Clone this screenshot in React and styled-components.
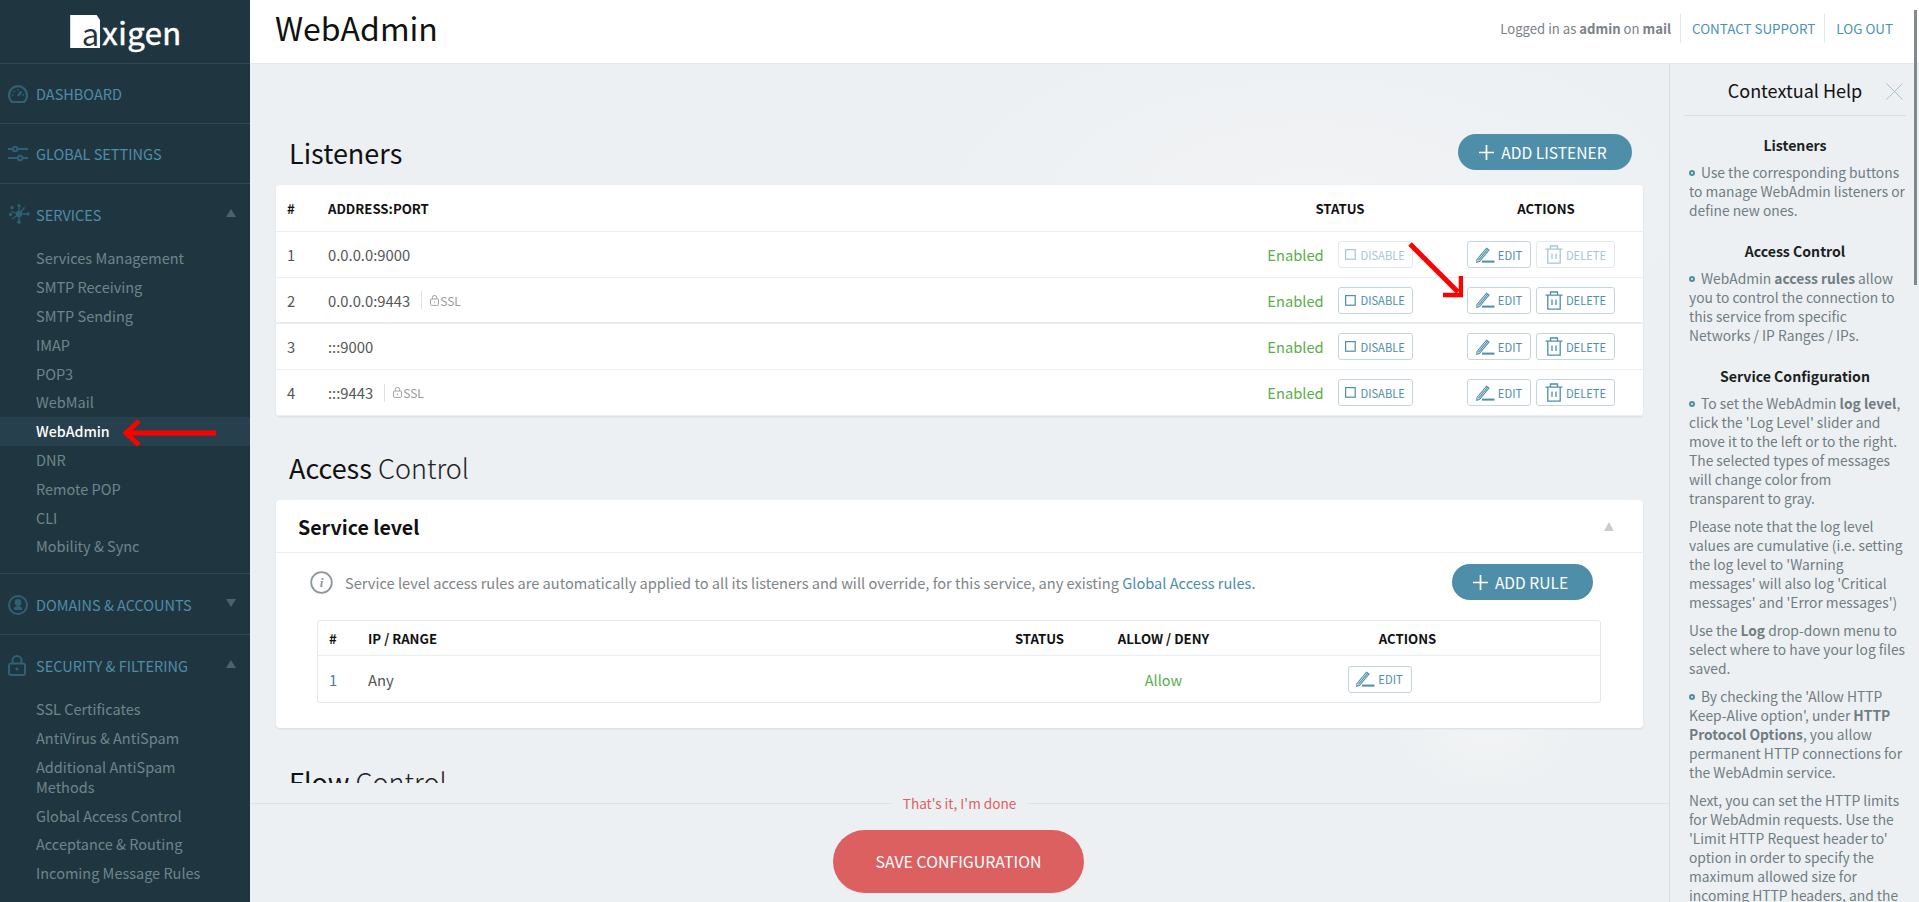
import React from "react";
import styled, { createGlobalStyle } from "styled-components";

const GlobalStyle = createGlobalStyle`
	html, body {
		margin: 0;
		height: 100%;
		overflow: hidden;
		background: #edf0f2;
		font-family: "Noto Sans CJK SC", "Source Sans Pro", "Liberation Sans", sans-serif;
	}
	* {
		box-sizing: border-box;
	}
`;

const services = ["Services Management", "SMTP Receiving", "SMTP Sending", "IMAP", "POP3", "WebMail", "WebAdmin", "DNR", "Remote POP", "CLI", "Mobility & Sync"];
const security = ["SSL Certificates", "AntiVirus & AntiSpam", "Additional AntiSpam Methods", "Global Access Control", "Acceptance & Routing", "Incoming Message Rules"];
const listeners = [
	{ id: 1, address: "0.0.0.0:9000", muted: true },
	{ id: 2, address: "0.0.0.0:9443", ssl: true, thick: true },
	{ id: 3, address: ":::9000" },
	{ id: 4, address: ":::9443", ssl: true },
];

const GaugeIcon = () => (
	<svg width="20" height="18" viewBox="0 0 20 18" fill="none" stroke="#2f6075" strokeWidth="2.2">
		<path d="M4 17 C1.8 15.4 1 13 1 10.5 C1 5.2 5 1.2 10 1.2 C15 1.2 19 5.2 19 10.5 C19 13 18.2 15.4 16 17 Z" />
		<path d="M10 11 L13.5 6.5" />
		<path d="M4 10h1.5M14.5 10H16M10 4v1.5M5.8 6l1 1" strokeWidth="1.5" />
	</svg>
);

const SlidersIcon = () => (
	<svg width="20" height="16" viewBox="0 0 20 16" fill="none" stroke="#2f6075" strokeWidth="2">
		<path d="M0 3h4.5M10 3h10M0 12h9.5M15 12h5" />
		<circle cx="7.2" cy="3" r="2.2" />
		<circle cx="12.2" cy="12" r="2.2" />
	</svg>
);

const NetworkIcon = () => (
	<svg width="22" height="20" viewBox="0 0 22 20" fill="#2f6075" stroke="#2f6075" strokeWidth="1.3">
		<circle cx="11" cy="10" r="2.6" />
		<path d="M11 10V2M11 10v8M11 10L3 7.5M11 10l8 0M11 10L4 15M11 10L16.5 3.5" />
		<circle cx="11" cy="1.8" r="1" />
		<circle cx="11" cy="18" r="1.2" />
		<circle cx="2.5" cy="10.5" r="1" />
		<circle cx="20" cy="10" r="1" />
		<circle cx="4" cy="3.5" r="1" />
	</svg>
);

const UserIcon = () => (
	<svg width="20" height="20" viewBox="0 0 20 20" fill="none" stroke="#2f6075" strokeWidth="2">
		<circle cx="10" cy="10" r="9" />
		<circle cx="10" cy="7.5" r="2.4" fill="#2f6075" />
		<path d="M5.8 15c0-3 1.8-4 4.2-4s4.2 1 4.2 4z" fill="#2f6075" stroke="none" />
	</svg>
);

const LockIcon = () => (
	<svg width="18" height="21" viewBox="0 0 18 21" fill="none" stroke="#2f6075" strokeWidth="2">
		<rect x="1" y="8.5" width="16" height="11.5" rx="2" />
		<path d="M4.5 8.5V5.5a4.5 4.5 0 0 1 9 0v3" />
		<circle cx="9" cy="14" r="1.6" fill="#2f6075" stroke="none" />
	</svg>
);

const PlusIcon = ({ size = 15 }) => (
	<svg width={size} height={size} viewBox="0 0 15 15" stroke="#fff" strokeWidth="1.7">
		<path d="M7.5 0v15M0 7.5h15" />
	</svg>
);

const BoxIcon = () => (
	<svg width="11" height="11" viewBox="0 0 11 11" fill="none" stroke="currentColor" strokeWidth="1.2">
		<rect x="0.6" y="0.6" width="9.6" height="9.6" />
	</svg>
);

const PencilIcon = () => (
	<svg width="19" height="16" viewBox="0 0 19 16" fill="none" stroke="currentColor" strokeWidth="1.1">
		<path d="M1 12.5 L10.5 1.2 L13 3.2 L3.4 14.5 L0.8 15.2 Z" />
		<path d="M2.4 13.4 L11.8 2.2" />
		<path d="M6 14.6h12.5" strokeWidth="2" />
	</svg>
);

const TrashIcon = () => (
	<svg width="18" height="19" viewBox="0 0 18 19" fill="none" stroke="currentColor" strokeWidth="1.3">
		<path d="M0.5 4.2h17M5.5 4.2V1h7v3.2" />
		<path d="M2.8 4.2v14h12.4v-14" />
		<path d="M7 8.5v5.5M11 8.5v5.5" />
	</svg>
);

const SmallLock = () => (
	<svg width="9" height="11" viewBox="0 0 9 11" fill="none" stroke="#999" strokeWidth="0.9">
		<rect x="0.5" y="4" width="8" height="6.4" rx="1" />
		<path d="M2.3 4V2.6a2.2 2.2 0 0 1 4.4 0V4" />
		<circle cx="4.5" cy="7.2" r="0.7" fill="#999" stroke="none" />
	</svg>
);

const InfoIcon = () => (
	<svg width="23" height="23" viewBox="0 0 23 23" fill="none">
		<circle cx="11.5" cy="11.5" r="10.3" stroke="#8d979b" strokeWidth="1.8" />
		<text x="11.5" y="16" textAnchor="middle" fontFamily="Liberation Serif, serif" fontStyle="italic" fontWeight="700" fontSize="13" fill="#8d979b">i</text>
	</svg>
);

const CloseIcon = () => (
	<svg width="17" height="17" viewBox="0 0 17 17" stroke="#a3c5d1" strokeWidth="1">
		<path d="M0.5 0.5l16 16M16.5 0.5l-16 16" />
	</svg>
);

const Shell = styled.div`
	display: grid;
	grid-template-columns: 250px 1fr;
	width: 100vw;
	height: 100vh;
	overflow: hidden;
	position: relative;
`;

const Sidebar = styled.aside`
	background: #1f3640;
	height: 100vh;
	overflow: hidden;
`;

const LogoRow = styled.div`
	height: 64px;
	display: flex;
	align-items: center;
	justify-content: center;
	gap: 2px;
	padding-left: 2px;
	border-bottom: 1px solid #33494f;
`;

const LogoBox = styled.span`
	width: 30px;
	height: 33px;
	background: #fff;
	color: #1f3640;
	font-size: 31px;
	line-height: 35px;
	text-align: right;
	padding-right: 1px;
	clip-path: polygon(0 0, 88% 0, 100% 16%, 100% 100%, 0 100%);
`;

const LogoText = styled.span`
	color: #fff;
	font-size: 31px;
	line-height: 33px;
	letter-spacing: 0.5px;
	-webkit-text-stroke: 0.5px #fff;
`;

const Section = styled.div`
	border-bottom: ${(p) => (p.$last ? "none" : "1px solid #33494f")};
	padding-bottom: ${(p) => (p.$open ? "12px" : "0")};
`;

const SectionHead = styled.div`
	height: ${(p) => (p.$tall ? "60px" : "59px")};
	padding-top: ${(p) => (p.$low ? "2px" : "0")};
	display: flex;
	align-items: center;
	color: #4f8ca8;
	font-size: 14.5px;
	position: relative;
`;

const IconSlot = styled.span`
	width: 36px;
	padding-left: 8px;
	display: flex;
	align-items: center;
	justify-content: flex-start;
`;

const Caret = styled.span`
	position: absolute;
	left: 226px;
	top: 50%;
	margin-top: -5px;
	width: 0;
	height: 0;
	border-left: 5px solid transparent;
	border-right: 5px solid transparent;
	border-${(p) => (p.$down ? "top" : "bottom")}: 8px solid #4d626a;
`;

const SubItem = styled.div`
	position: relative;
	min-height: 28.8px;
	padding: 4.4px 36px;
	font-size: ${(p) => (p.$active ? "14.2px" : "14.5px")};
	line-height: 20px;
	color: ${(p) => (p.$active ? "#fff" : "#6f858c")};
	background: ${(p) => (p.$active ? "#26404d" : "transparent")};
	font-weight: ${(p) => (p.$active ? 500 : 400)};
`;

const SideArrow = styled.svg`
	position: absolute;
	left: 122px;
	top: 0;
`;

const MainArea = styled.div`
	display: flex;
	flex-direction: column;
	height: 100vh;
	min-width: 0;
`;

const TopBar = styled.header`
	height: 64px;
	flex: none;
	background: #fff;
	border-bottom: 1px solid #e3e7e9;
	display: flex;
	align-items: center;
	justify-content: space-between;
	padding: 0 26px 6px 25px;
`;

const PageTitle = styled.h1`
	margin: -4px 0 0;
	font-size: 32px;
	font-weight: 400;
	color: #111;
`;

const UserBar = styled.div`
	display: flex;
	align-items: center;
	font-size: 13.4px;
	color: #7c8185;
	span {
		font-size: 13.15px;
	}
	b {
		font-weight: 700;
	}
`;

const TopLink = styled.a`
	color: #4b93b3;
	height: 29px;
	line-height: 29px;
	margin-left: 9px;
	padding-left: 11px;
	border-left: 1px solid #e3e7e9;
`;

const Body = styled.div`
	flex: 1;
	min-height: 0;
	display: flex;
`;

const Center = styled.div`
	flex: 1;
	min-width: 0;
	display: flex;
	flex-direction: column;
`;

const Scroller = styled.main`
	flex: 1;
	min-height: 0;
	overflow: hidden;
	padding: 70px 26px 0;
	background:
		radial-gradient(ellipse 200px 40px at 52% 83%, #f6f8f9 0%, transparent 100%),
		radial-gradient(ellipse 420px 200px at 75% 20%, #f1f3f5 0%, transparent 100%),
		radial-gradient(ellipse 100px 90px at 87% 90%, #f2f4f5 0%, transparent 100%),
		#edf0f2;
`;

const HeadRow = styled.div`
	display: flex;
	align-items: center;
	justify-content: space-between;
	height: 36px;
	padding: 0 11px 0 13px;
	margin: ${(p) => p.$margin || "33px 0 15px"};
`;

const Heading = styled.h2`
	margin: 0;
	font-size: 27px;
	font-weight: 400;
	color: #111;
	span {
		font-weight: 300;
		color: #222;
	}
`;

const PillButton = styled.button`
	height: 36px;
	width: ${(p) => p.$width};
	border: none;
	border-radius: 18px;
	background: #4e8ea8;
	color: #fff;
	font-family: inherit;
	font-size: 15.6px;
	padding: 0 4px 0 0;
	display: flex;
	align-items: center;
	justify-content: center;
	gap: 7px;
`;

const Card = styled.section`
	position: relative;
	background: #fff;
	border-radius: 4px;
	box-shadow: 0 1px 2px #d6dcdf;
`;

const ListRow = styled.div`
	display: grid;
	grid-template-columns: 41px 1fr 207px 158px;
	align-items: center;
	height: ${(p) => (p.$head ? "47px" : "46px")};
	padding: 0 18px 0 11px;
	border-bottom: ${(p) => (p.$thick ? "2px solid #e9edef" : "1px solid #eceff1")};
	font-size: 14.8px;
	color: #555;
	&:last-child {
		border-bottom: none;
	}
`;

const HeadCell = styled.div`
	font-size: 13.2px;
	font-weight: 700;
	color: #111;
	text-align: ${(p) => p.$align || "left"};
`;

const AddressCell = styled.div`
	display: flex;
	align-items: center;
`;

const SslTag = styled.span`
	display: inline-flex;
	align-items: center;
	gap: 1px;
	margin-left: 11px;
	padding-left: 8px;
	height: 18px;
	border-left: 1px solid #dfe3e5;
	font-size: 12px;
	color: #999;
`;

const StatusCell = styled.div`
	display: flex;
	align-items: center;
	justify-content: center;
	gap: 14px;
	margin-right: 47px;
`;

const HeadStatus = styled(HeadCell)`
	margin-right: 47px;
`;

const Enabled = styled.span`
	color: #5aae4a;
	font-size: 14.7px;
`;

const ActionCell = styled.div`
	display: flex;
	align-items: center;
	gap: 5px;
	padding-left: ${(p) => p.$indent || "0"};
`;

const ActionButton = styled.button`
	height: 27px;
	width: ${(p) => p.$width};
	display: flex;
	align-items: center;
	justify-content: center;
	gap: ${(p) => p.$gap || "3px"};
	padding: 0;
	background: #fff;
	border: 1px solid #c3d6dd;
	border-radius: 3px;
	color: #4e8ea8;
	font-family: inherit;
	font-size: 11.2px;
	opacity: ${(p) => (p.$muted ? 0.5 : 1)};
	svg {
		flex: none;
	}
`;

const CardHead = styled.div`
	height: 53px;
	display: flex;
	align-items: center;
	justify-content: space-between;
	padding: 0 29px 0 22px;
	border-bottom: 1px solid #eceff1;
`;

const CardTitle = styled.h3`
	margin: 0;
	font-size: 19.6px;
	font-weight: 700;
	color: #111;
`;

const SmallCaret = styled.span`
	width: 0;
	height: 0;
	border-left: 5px solid transparent;
	border-right: 5px solid transparent;
	border-bottom: 9px solid #c8cccf;
`;

const CardBody = styled.div`
	padding: 11px 42px 25px 41px;
`;

const InfoRow = styled.div`
	display: flex;
	align-items: center;
	justify-content: space-between;
	height: 36px;
	margin: 0 8px 20px -7px;
`;

const InfoText = styled.p`
	margin: 0;
	display: flex;
	align-items: center;
	gap: 12px;
	font-size: 14.6px;
	color: #808589;
	a {
		color: #4a8fa8;
	}
`;

const RuleTable = styled.div`
	border: 1px solid #e3e7e9;
	border-radius: 3px;
`;

const RuleRow = styled.div`
	display: grid;
	grid-template-columns: 39px 1fr 100px 148px 340px;
	align-items: center;
	height: ${(p) => (p.$head ? "35px" : "46px")};
	padding: 0 22.5px 0 11px;
	border-bottom: ${(p) => (p.$head ? "1px solid #e9edef" : "none")};
	font-size: 14.8px;
	color: #555;
`;

const RuleIndex = styled.span`
	color: #3f7f9a;
`;

const Allow = styled.span`
	color: #5aae4a;
	text-align: center;
	font-size: 14.5px;
`;

const OverArrow = styled.svg`
	position: absolute;
	left: 1131px;
	top: 56px;
`;

const Footer = styled.footer`
	height: 119px;
	flex: none;
	padding-top: 10px;
	display: flex;
	flex-direction: column;
	align-items: center;
	background: #edf0f2;
`;

const DoneLine = styled.div`
	width: 100%;
	height: 20px;
	display: flex;
	align-items: center;
	gap: 11px;
	color: #dd6060;
	font-size: 13.6px;
	&::before,
	&::after {
		content: "";
		flex: 1;
		height: 1px;
		background: #dfe3e5;
	}
`;

const SaveButton = styled.button`
	width: 251px;
	height: 63px;
	margin: 17px 2px 0 0;
	border: none;
	border-radius: 32px;
	background: #dd6060;
	color: #fff;
	font-family: inherit;
	font-size: 15.9px;
`;

const Help = styled.aside`
	width: 250px;
	flex: none;
	overflow: hidden;
	border-left: 1px solid #d6dcdf;
	padding: 0 13px 0 14px;
`;

const HelpHead = styled.div`
	position: relative;
	height: 52px;
	display: flex;
	align-items: center;
	justify-content: center;
	border-bottom: 1px solid #d9dee0;
	font-size: 18px;
	color: #111;
	svg {
		position: absolute;
		right: 3px;
		top: 19px;
	}
`;

const HelpTitle = styled.h4`
	margin: ${(p) => (p.$first ? "20px" : "22px")} 0 8px;
	text-align: center;
	font-size: 14.1px;
	line-height: 19px;
	font-weight: 700;
	color: #1a1f22;
`;

const HelpText = styled.p`
	margin: 0 0 9px;
	padding-left: 5px;
	font-size: 13.8px;
	line-height: 19px;
	color: #6f7d83;
	b {
		font-weight: 700;
	}
`;

const Dot = styled.span`
	display: inline-block;
	width: 6px;
	height: 6px;
	margin: 0 6px 3px 0;
	border: 2px solid #4e8ea8;
	border-radius: 50%;
	vertical-align: middle;
`;

const ScrollThumb = styled.div`
	position: absolute;
	left: 1914px;
	top: 10px;
	width: 3px;
	height: 275px;
	background: #7f8a8f;
`;

const App = () => {
	return (
		<Shell>
			<GlobalStyle />
			<Sidebar>
				<LogoRow>
					<LogoBox>a</LogoBox>
					<LogoText>xigen</LogoText>
				</LogoRow>
				<Section>
					<SectionHead><IconSlot><GaugeIcon /></IconSlot>DASHBOARD</SectionHead>
				</Section>
				<Section>
					<SectionHead><IconSlot><SlidersIcon /></IconSlot>GLOBAL SETTINGS</SectionHead>
				</Section>
				<Section $open>
					<SectionHead $tall><IconSlot><NetworkIcon /></IconSlot>SERVICES<Caret /></SectionHead>
					{services.map((name) => (
						<SubItem key={name} $active={name === "WebAdmin"}>
							{name}
							{name === "WebAdmin" && (
								<SideArrow width="96" height="30" viewBox="0 0 96 30" fill="none" stroke="#f00" strokeWidth="5">
									<path d="M94 16H6" />
									<path d="M17 4L4 16l13 12" />
								</SideArrow>
							)}
						</SubItem>
					))}
				</Section>
				<Section>
					<SectionHead $tall $low><IconSlot><UserIcon /></IconSlot>DOMAINS &amp; ACCOUNTS<Caret $down /></SectionHead>
				</Section>
				<Section $last>
					<SectionHead $tall $low><IconSlot><LockIcon /></IconSlot>SECURITY &amp; FILTERING<Caret /></SectionHead>
					{security.map((name) => (
						<SubItem key={name}>{name}</SubItem>
					))}
				</Section>
			</Sidebar>
			<MainArea>
				<TopBar>
					<PageTitle>WebAdmin</PageTitle>
					<UserBar>
						<span>Logged in as <b>admin</b> on <b>mail</b></span>
						<TopLink>CONTACT SUPPORT</TopLink>
						<TopLink>LOG OUT</TopLink>
					</UserBar>
				</TopBar>
				<Body>
					<Center>
						<Scroller>
							<HeadRow $margin="0 0 15px">
								<Heading>Listeners</Heading>
								<PillButton $width="174px"><PlusIcon />ADD LISTENER</PillButton>
							</HeadRow>
							<Card>
								<ListRow $head>
									<HeadCell>#</HeadCell>
									<HeadCell>ADDRESS:PORT</HeadCell>
									<HeadStatus $align="center">STATUS</HeadStatus>
									<HeadCell $align="center">ACTIONS</HeadCell>
								</ListRow>
								{listeners.map((row) => (
									<ListRow key={row.id} $thick={row.thick}>
										<span>{row.id}</span>
										<AddressCell>
											{row.address}
											{row.ssl && <SslTag><SmallLock />SSL</SslTag>}
										</AddressCell>
										<StatusCell>
											<Enabled>Enabled</Enabled>
											<ActionButton $width="75px" $gap="4px" $muted={row.muted}><BoxIcon />DISABLE</ActionButton>
										</StatusCell>
										<ActionCell>
											<ActionButton $width="64px"><PencilIcon />EDIT</ActionButton>
											<ActionButton $width="79px" $muted={row.muted}><TrashIcon />DELETE</ActionButton>
										</ActionCell>
									</ListRow>
								))}
								<OverArrow width="56" height="60" viewBox="0 0 56 60" fill="none" stroke="#f00" strokeWidth="5">
									<path d="M3 3L51 51" />
									<path d="M36 54H54V35" strokeWidth="4.5" />
								</OverArrow>
							</Card>
							<HeadRow>
								<Heading>Access <span>Control</span></Heading>
							</HeadRow>
							<Card>
								<CardHead>
									<CardTitle>Service level</CardTitle>
									<SmallCaret />
								</CardHead>
								<CardBody>
									<InfoRow>
										<InfoText>
											<InfoIcon />
											<span>Service level access rules are automatically applied to all its listeners and will override, for this service, any existing <a>Global Access rules.</a></span>
										</InfoText>
										<PillButton $width="141px"><PlusIcon />ADD RULE</PillButton>
									</InfoRow>
									<RuleTable>
										<RuleRow $head>
											<HeadCell>#</HeadCell>
											<HeadCell>IP / RANGE</HeadCell>
											<HeadCell $align="center">STATUS</HeadCell>
											<HeadCell $align="center">ALLOW / DENY</HeadCell>
											<HeadCell $align="center">ACTIONS</HeadCell>
										</RuleRow>
										<RuleRow>
											<RuleIndex>1</RuleIndex>
											<span>Any</span>
											<span />
											<Allow>Allow</Allow>
											<ActionCell $indent="110px">
												<ActionButton $width="64px"><PencilIcon />EDIT</ActionButton>
											</ActionCell>
										</RuleRow>
									</RuleTable>
								</CardBody>
							</Card>
							<HeadRow $margin="35px 0 0">
								<Heading>Flow <span>Control</span></Heading>
							</HeadRow>
						</Scroller>
						<Footer>
							<DoneLine>That's it, I'm done</DoneLine>
							<SaveButton>SAVE CONFIGURATION</SaveButton>
						</Footer>
					</Center>
					<Help>
						<HelpHead>Contextual Help<CloseIcon /></HelpHead>
						<HelpTitle $first>Listeners</HelpTitle>
						<HelpText><Dot />Use the corresponding buttons to manage WebAdmin listeners or define new ones.</HelpText>
						<HelpTitle>Access Control</HelpTitle>
						<HelpText><Dot />WebAdmin <b>access rules</b> allow you to control the connection to this service from specific Networks / IP Ranges / IPs.</HelpText>
						<HelpTitle>Service Configuration</HelpTitle>
						<HelpText><Dot />To set the WebAdmin <b>log level</b>, click the 'Log Level' slider and move it to the left or to the right. The selected types of messages will change color from transparent to gray.</HelpText>
						<HelpText>Please note that the log level values are cumulative (i.e. setting the log level to 'Warning messages' will also log 'Critical messages' and 'Error messages')</HelpText>
						<HelpText>Use the <b>Log</b> drop-down menu to select where to have your log files saved.</HelpText>
						<HelpText><Dot />By checking the 'Allow HTTP Keep-Alive option', under <b>HTTP Protocol Options</b>, you allow permanent HTTP connections for the WebAdmin service.</HelpText>
						<HelpText>Next, you can set the HTTP limits for WebAdmin requests. Use the 'Limit HTTP Request header to' option in order to specify the maximum allowed size for incoming HTTP headers, and the</HelpText>
					</Help>
				</Body>
			</MainArea>
			<ScrollThumb />
		</Shell>
	);
};

export default App;
